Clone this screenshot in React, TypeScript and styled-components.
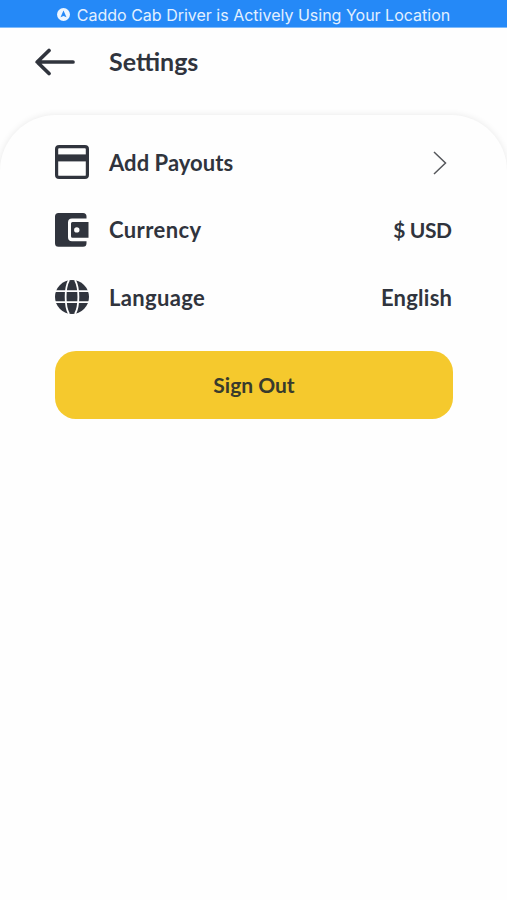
import React from "react";
import styled, { createGlobalStyle } from "styled-components";

const INK = "#30343d";

const GlobalStyle = createGlobalStyle`
  * { box-sizing: border-box; }
  body { margin: 0; background: #fefefe; }
`;

const Screen = styled.main`
  display: flex;
  flex-direction: column;
  width: 100%;
  height: 900px;
  overflow: hidden;
  background: #fefefe;
  color: ${INK};
  font-family: Lato, sans-serif;
  font-weight: 700;
`;

const StatusBanner = styled.div`
  display: flex;
  align-items: center;
  justify-content: center;
  gap: 7px;
  height: 28px;
  padding-top: 2px;
  flex: none;
  background: #2589f7;
  border-bottom: 1px solid #7fbbfb;
  color: #e2f0ff;
  font: 400 16px/24px Inter, sans-serif;
`;

const Label = styled.span<{ $tracking?: number; $size?: number }>`
  font-size: ${({ $size }) => ($size ? `${$size}px` : "inherit")};
  letter-spacing: ${({ $tracking = 0 }) => $tracking}px;
  margin-right: ${({ $tracking = 0 }) => -$tracking}px;
  white-space: nowrap;
`;

const Header = styled.header`
  display: flex;
  align-items: center;
  gap: 33px;
  height: 87px;
  flex: none;
  padding: 0 35px 19px;
`;

const Title = styled.h1`
  margin: 0;
  padding-bottom: 2px;
  font-size: 25px;
  line-height: 30px;
  font-weight: 700;
`;

const Sheet = styled.section`
  flex: 1;
  padding: 14px 54px 0 55px;
  border-radius: 56px 56px 0 0;
  background: #fefefe;
  box-shadow: 0 0 7px rgba(0, 0, 0, 0.09);
`;

const Row = styled.div`
  display: flex;
  align-items: center;
  height: 67.5px;
  font-size: 22px;
  line-height: 26px;
`;

const RowIcon = styled.span`
  display: flex;
  width: 54px;
  flex: none;
  padding-bottom: 1.5px;
`;

const RowValue = styled.span`
  display: flex;
  margin-left: auto;
  padding-right: 1px;
`;

const Rows = styled.div`
  display: flex;
  flex-direction: column;
`;

const SignOutButton = styled.button`
  display: flex;
  align-items: center;
  justify-content: center;
  width: 398px;
  height: 67.5px;
  margin-top: 19.5px;
  padding: 0;
  border: 0;
  border-radius: 21px;
  background: #f5c92d;
  color: #393b2c;
  font: 700 21px/26px Lato, sans-serif;
`;

const Chevron = styled.svg`
  margin-right: 5px;
`;

const LocationIcon = () => (
  <svg width="13" height="13" viewBox="0 0 13 13">
    <circle cx="6.5" cy="6.5" r="6.5" fill="#edf6ff" />
    <path d="M6.5 2.5 9.5 9.3 6.5 7.9 3.5 9.3Z" fill="#2589f7" />
  </svg>
);

const BackIcon = () => (
  <svg width="41" height="28" viewBox="0 0 41 28" fill="none" stroke={INK} strokeWidth="3.7" strokeLinecap="round" strokeLinejoin="round">
    <path d="M38 14H2.5M14 2.5 2.2 14 14 25.5" />
  </svg>
);

const CardIcon = () => (
  <svg width="34" height="34" viewBox="0 0 34 34" fill="none" stroke={INK}>
    <rect x="1.6" y="1.6" width="30.8" height="30.8" rx="2.5" strokeWidth="3.2" />
    <path d="M1.5 12.9h31" strokeWidth="7" />
  </svg>
);

const WalletIcon = () => (
  <svg width="34" height="34" viewBox="0 0 34 34" fill={INK} fillRule="evenodd">
    <path d="M3.5 0H28a3.5 3.5 0 0 1 3.5 3.5V5.6H17a4 4 0 0 0-4 4V24.2a4 4 0 0 0 4 4H31.5V30.3A3.5 3.5 0 0 1 28 33.8H3.5A3.5 3.5 0 0 1 0 30.3V3.5A3.5 3.5 0 0 1 3.5 0Z" />
    <path d="M17.5 9H33.5V24.8H17.5A1.5 1.5 0 0 1 16 23.3V10.5A1.5 1.5 0 0 1 17.5 9ZM21.8 14.2a2.7 2.7 0 1 0 0 5.4a2.7 2.7 0 1 0 0-5.4Z" />
  </svg>
);

const GlobeIcon = () => (
  <svg width="34" height="34" viewBox="0 0 34 34" fill="none">
    <circle cx="17" cy="17" r="17" fill={INK} />
    <path d="M0 11.2H34M0 22.2H34M14 0C9.5 8 9.5 26 14 34M20 0C24.5 8 24.5 26 20 34" stroke="#fefefe" strokeWidth="1.8" />
  </svg>
);

export default function App() {
  return (
    <Screen>
      <GlobalStyle />
      <StatusBanner>
        <LocationIcon />
        <Label>Caddo Cab Driver is Actively Using Your Location</Label>
      </StatusBanner>
      <Header>
        <BackIcon />
        <Title>Settings</Title>
      </Header>
      <Sheet>
        <Rows>
          <Row>
            <RowIcon><CardIcon /></RowIcon>
            <Label $tracking={0.05}>Add Payouts</Label>
            <RowValue>
              <Chevron width="14" height="24" viewBox="0 0 14 24" fill="none" stroke="#55575b" strokeWidth="1.5">
                <path d="M1 1 12.5 12 1 23" />
              </Chevron>
            </RowValue>
          </Row>
          <Row>
            <RowIcon><WalletIcon /></RowIcon>
            <Label $tracking={0.4}>Currency</Label>
            <RowValue><Label $size={21} $tracking={-0.4}>$ USD</Label></RowValue>
          </Row>
          <Row>
            <RowIcon><GlobeIcon /></RowIcon>
            <Label $tracking={0.35}>Language</Label>
            <RowValue><Label $tracking={0.25}>English</Label></RowValue>
          </Row>
        </Rows>
        <SignOutButton>Sign Out</SignOutButton>
      </Sheet>
    </Screen>
  );
}
